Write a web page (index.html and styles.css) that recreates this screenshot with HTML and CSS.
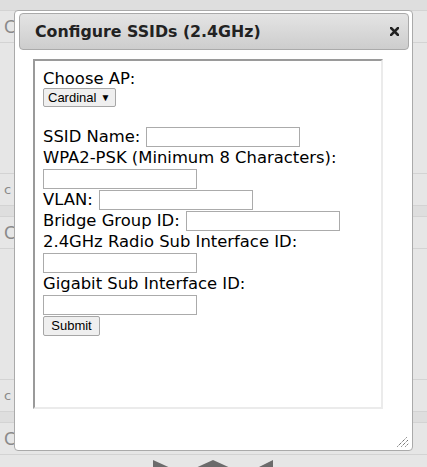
FILE: index.html
```html
<!DOCTYPE html>
<html>
<head>
<meta charset="utf-8">
<link rel="stylesheet" href="styles.css">
</head>
<body>
<div class="page">
  <div class="band"></div>
  <div class="row big"><span>C</span></div>
  <div class="gap"></div>
  <div class="row small"><span>c</span></div>
  <div class="band"></div>
  <div class="row big"><span>C</span></div>
  <div class="gap"></div>
  <div class="row small"><span>c</span></div>
  <div class="band"></div>
  <div class="row big"><span>C</span></div>
  <div class="foot">
    <svg width="130" height="12" viewBox="0 0 130 12">
      <polygon points="0,2 22,12 0,12" fill="#6b6b6b"/>
      <polygon points="38,12 60,2 82,12" fill="#6b6b6b"/>
      <polygon points="100,12 120,2 120,12" fill="#6b6b6b"/>
    </svg>
  </div>
</div>

<div class="dialog">
  <div class="titlebar">
    <span class="title">Configure SSIDs (2.4GHz)</span>
    <svg class="close" width="9" height="9" viewBox="0 0 9 9">
      <path d="M1 1 L8 8 M8 1 L1 8" stroke="#222" stroke-width="2.6" stroke-linecap="square"/>
    </svg>
  </div>
  <div class="frame">
    <div class="framebody">
      <div class="line short">Choose AP:</div>
      <div class="line short"><span class="select">Cardinal <span class="arrow">▼</span></span></div>
      <div class="line short">&nbsp;</div>
      <div class="line">SSID Name: <span class="input"></span></div>
      <div class="line">WPA2-PSK (Minimum 8 Characters):</div>
      <div class="line"><span class="input"></span></div>
      <div class="line">VLAN: <span class="input"></span></div>
      <div class="line">Bridge Group ID: <span class="input"></span></div>
      <div class="line">2.4GHz Radio Sub Interface ID:</div>
      <div class="line"><span class="input"></span></div>
      <div class="line">Gigabit Sub Interface ID:</div>
      <div class="line"><span class="input"></span></div>
      <div class="line"><span class="button">Submit</span></div>
    </div>
  </div>
  <svg class="grip" width="12" height="10" viewBox="0 0 12 10">
    <path d="M0.5 9.5 L9.5 0.5 M4.5 9.5 L11.5 2.5 M8.5 9.5 L11.5 6.5" stroke="#333" stroke-width="1" stroke-dasharray="1 1"/>
  </svg>
</div>
</body>
</html>
```
FILE: styles.css
```css
html, body {
  margin: 0;
  padding: 0;
}
body {
  width: 427px;
  height: 467px;
  overflow: hidden;
  background: #e6e6e6;
  font-family: "DejaVu Sans", Verdana, sans-serif;
  position: relative;
}
.page {
  display: flex;
  flex-direction: column;
}
.band {
  height: 10px;
  background: #dedede;
  border-bottom: 1px solid #d3d3d3;
}
.row {
  height: 31px;
  display: flex;
  align-items: center;
  padding-left: 4px;
  color: #8a8a8a;
  border-bottom: 1px solid #d3d3d3;
  background: #e6e6e6;
}
.row.big { font-size: 17px; }
.row.small { font-size: 13px; }
.gap {
  height: 130px;
  border-bottom: 1px solid #d3d3d3;
}
.foot {
  display: flex;
  justify-content: center;
  padding-top: 3px;
  padding-left: 8px;
}
.foot svg { display: block; }

.dialog {
  position: absolute;
  left: 14px;
  top: 10px;
  width: 399px;
  height: 441px;
  box-sizing: border-box;
  border: 1px solid #aaaaaa;
  border-radius: 4px;
  background: #ffffff;
  padding: 2px 3px 2px 4px;
}
.titlebar {
  height: 37px;
  box-sizing: border-box;
  border: 1px solid #aaaaaa;
  border-radius: 4px;
  background: linear-gradient(#e4e4e4, #cdcdcd);
  display: flex;
  align-items: center;
  justify-content: space-between;
  padding: 0 9px 0 15px;
}
.title {
  font-family: "DejaVu Sans", Verdana, sans-serif;
  font-weight: bold;
  font-size: 15.8px;
  color: #222222;
}
.close { display: block; }
.frame {
  margin: 9px 0 0 14px;
  width: 350px;
  height: 350px;
  box-sizing: border-box;
  border-style: solid;
  border-width: 2px;
  border-color: #9a9a9a #ebebeb #ebebeb #9a9a9a;
  overflow: hidden;
}
.framebody {
  padding: 8px;
  font-size: 16.4px;
  color: #000;
}
.line {
  display: flex;
  align-items: center;
  gap: 6px;
  height: 21px;
  white-space: nowrap;
}
.line.short { height: 19px; }
.input {
  display: inline-block;
  width: 154px;
  height: 20px;
  box-sizing: border-box;
  border: 1px solid #ababab;
  background: #fff;
}
.select {
  display: inline-flex;
  align-items: center;
  height: 19px;
  box-sizing: border-box;
  padding: 0 5px 0 4px;
  border: 1px solid #a6a6a6;
  border-radius: 2px;
  background: #efefef;
  font-family: "Liberation Sans", Arial, sans-serif;
  font-size: 13px;
  gap: 4px;
}
.arrow { font-size: 10px; }
.button {
  display: inline-flex;
  align-items: center;
  justify-content: center;
  width: 57px;
  height: 20px;
  box-sizing: border-box;
  border: 1px solid #a6a6a6;
  border-radius: 2px;
  background: #efefef;
  font-family: "Liberation Sans", Arial, sans-serif;
  font-size: 13px;
}
.grip {
  position: absolute;
  right: 3px;
  bottom: 3px;
}
```
